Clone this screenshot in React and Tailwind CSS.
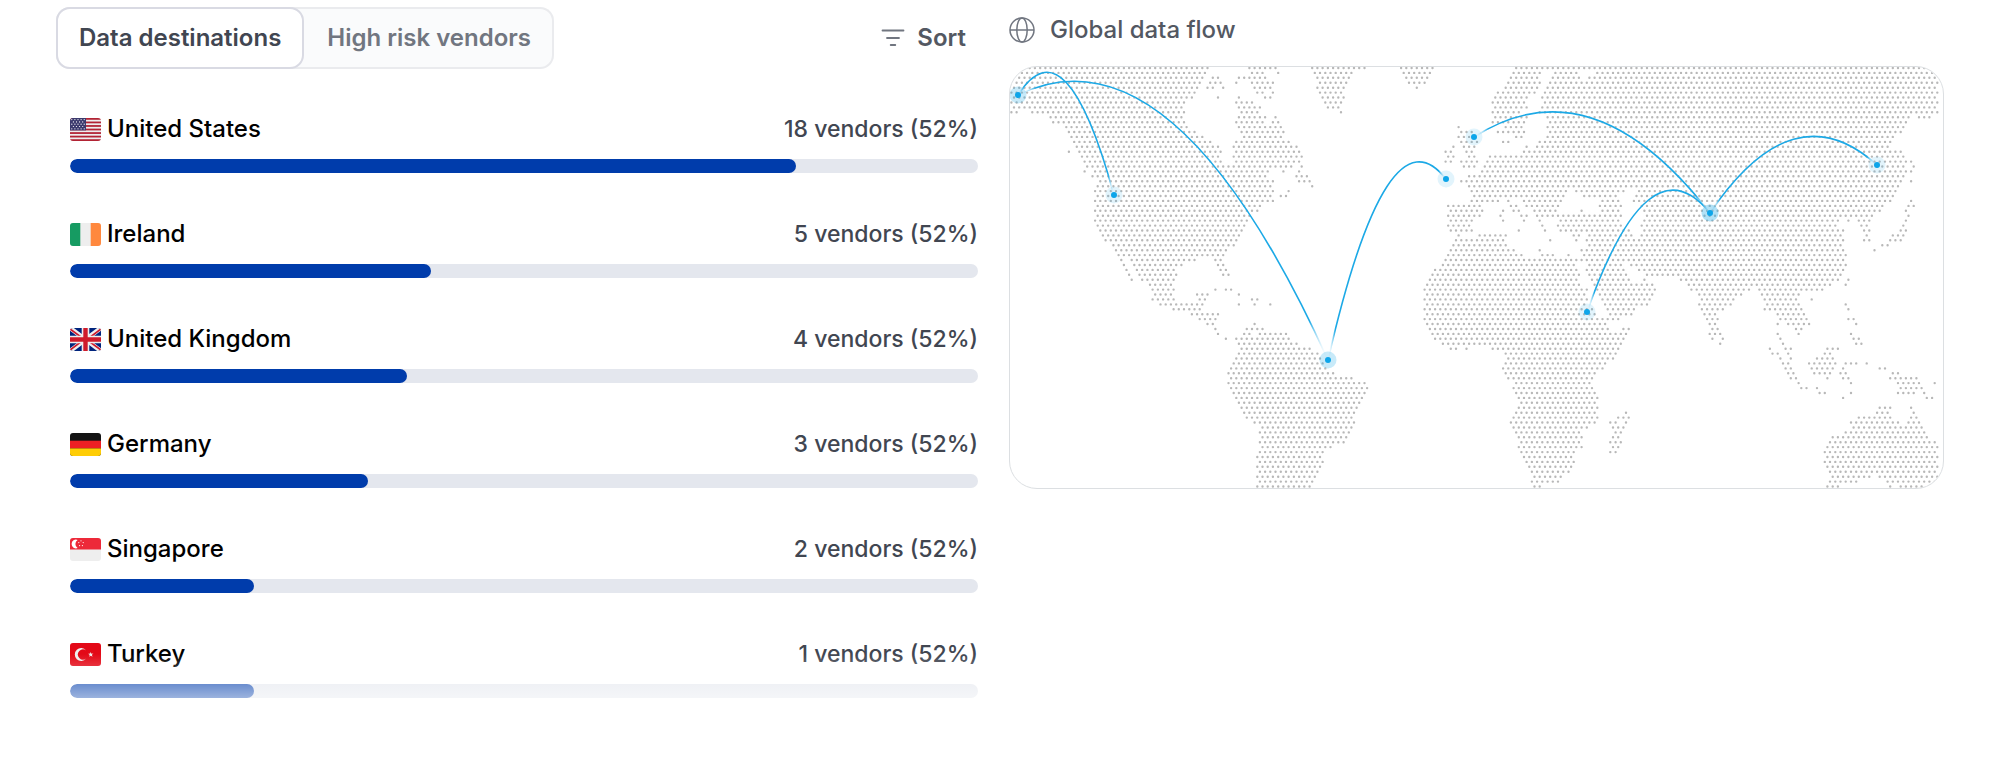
import React, { useState } from 'react';

const DESTINATIONS = [
  { code: 'us', country: 'United States', vendors: 18, share: 52, fill: 80 },
  { code: 'ie', country: 'Ireland', vendors: 5, share: 52, fill: 39.8 },
  { code: 'gb', country: 'United Kingdom', vendors: 4, share: 52, fill: 37.1 },
  { code: 'de', country: 'Germany', vendors: 3, share: 52, fill: 32.8 },
  { code: 'sg', country: 'Singapore', vendors: 2, share: 52, fill: 20.3 },
  { code: 'tr', country: 'Turkey', vendors: 1, share: 52, fill: 20.3 },
];

// Land spans for every dotted row of the map, north to south
const LAND_ROWS = [
  '15-199 238-265 302-355 392-422 505-917',
  '12-195 243-253 269-269 304-342 394-420 504-528 545-567 587-922',
  '10-192 203-208 229-255 307-340 397-418 502-530 543-567 579-579 585-925',
  '7-190 201-212 227-227 242-263 308-337 399-416 499-528 540-928',
  '5-187 198-203 214-214 245-261 308-334 407-407 497-525 538-925',
  '2-184 247-252 263-263 311-332 488-523 534-928',
  '2-180 208-208 229-229 256-261 310-334 485-515 534-925',
  '2-174 227-242 316-332 483-514 533-928',
  '4-172 229-250 318-328 485-517 534-925',
  '1-7 23-174 232-248 331-331 483-510 532-928',
  '40-172 229-253 266-266 485-515 535-898 910-920',
  '43-174 227-253 263-268 483-512 541-897',
  '55-177 229-271 448-448 498-513 538-894',
  '58-185 232-274 450-462 490-512 540-892',
  '62-193 234-271 447-460 493-493 507-512 537-883',
  '64-201 227-279 452-467 493-498 532-881',
  '67-208 224-287 443-443 453-467 517-517 528-878',
  '59-59 70-211 227-289 436-442 456-463 513-890',
  '73-208 224-292 438-443 460-466 480-894',
  '75-211 227-289 436-441 452-468 477-902',
  '78-282 292-292 454-464 475-894 904-904',
  '75-75 85-258 274-274 289-289 473-902',
  '82-257 287-297 458-894',
  '90-263 289-300 452-452 457-892 902-902',
  '87-261 303-303 459-889',
  '85-263 279-279 462-556 567-614 629-887',
  '87-259 271-276 464-555 572-608 627-884',
  '85-256 263-263 462-488 498-498 514-550 590-610 624-881 902-902',
  '87-248 438-470 501-506 517-550 590-612 629-873 898-904',
  '85-248 441-473 493-493 503-509 525-547 572-572 593-608 634-871 897-897',
  '87-240 438-468 491-491 512-517 527-612 637-862 899-899',
  '85-238 441-464 493-493 514-514 530-530 551-609 634-830 838-838 847-860 897-897',
  '87-233 438-460 533-533 548-613 632-823 852-857 894-894',
  '90-232 441-462 509-509 535-535 551-617 632-832 854-859 891-896',
  '92-230 449-449 470-496 564-569 579-620 630-830 857-857 883-893',
  '95-227 447-494 541-541 566-566 576-832 854-859 880-891',
  '103-224 444-496 579-833 873-878',
  '106-217 442-503 530-530 572-832 864-864',
  '109-213 439-512 530-543 559-559 573-836',
  '111-111 122-186 206-212 436-835',
  '114-114 124-172 208-214 433-566 577-613 621-836',
  '117-117 127-165 212-217 426-568 577-614 628-833',
  '119-119 130-164 213-219 423-567 580-617 635-831',
  '122-122 133-164 420-568 582-620 635-635 671-828 838-838',
  '138-161 417-570 584-643 678-821 836-836',
  '143-164 206-206 216-222 415-577 587-646 682-740 749-813',
  '146-161 187-198 229-229 417-574 589-643 689-731 752-789',
  '143-164 190-195 242-247 415-577 592-641 692-724 754-787 802-802',
  '151-193 229-229 245-245 261-261 417-574 594-638 689-721 757-789 836-836',
  '163-190 415-582 597-625 692-713 754-792 838-838',
  '182-208 417-585 600-622 694-706 768-794',
  '190-206 415-608 697-708 770-797 838-844',
  '198-203 245-245 417-597 700-706 768-768 778-799 846-846',
  '206-206 237-253 420-598 614-619 703-708 786-791',
  '208-208 234-240 250-277 423-617 700-711 768-768 789-789 841-841',
  '216-216 227-279 426-614 703-703 713-713 770-770 844-849',
  '229-287 433-612 711-711 773-773 846-851',
  '232-300 441-446 457-457 483-608 760-760 776-781 817-828',
  '229-308 496-606 762-768 778-778 815-820',
  '227-310 498-603 770-770 781-781 807-823',
  '224-313 496-595 773-778 799-825 836-847 857-857',
  '221-318 493-593 776-781 802-823 833-833 870-875',
  '219-323 496-585 778-783 804-820 830-836 883-888',
  '221-342 498-582 781-786 817-817 833-838 880-907',
  '219-356 506-580 789-789 841-841 888-909 925-925',
  '221-357 503-582 791-797 807-807 891-912',
  '224-355 506-585 810-815 841-841 888-904 914-914',
  '227-352 508-585 833-833 917-922',
  '229-350 511-585',
  '232-347 508-588 870-880 901-901',
  '234-344 506-585 616-616 867-878 904-904',
  '237-342 503-588 608-619 849-880 901-907',
  '245-344 501-585 600-606 616-616 841-888 899-909',
  '253-342 503-578 603-613 844-912',
  '250-339 506-570 606-611 836-914',
  '253-337 508-572 603-608 823-917',
  '250-334 511-570 600-611 820-925',
  '253-321 508-572 603-608 817-928',
  '250-313 511-565 600-606 815-925',
  '247-311 513-562 817-928',
  '250-313 516-564 815-925',
  '247-311 519-562 817-928',
  '250-308 522-559 820-927',
  '247-305 524-552 823-860 870-928',
  '250-302 522-549 820-847 878-925',
  '247-300 524-530 817-828 880-880 891-912',
];

const DOT_X = 5.231;
const DOT_Y = 4.924;

const landDots = LAND_ROWS.flatMap((row, r) => {
  const spans = row.split(' ').map((span) => span.split('-').map(Number));
  const start = r % 2 ? 1.4 : 4;
  const dots = [];
  for (let x = start; x < 932; x += DOT_X) {
    if (spans.some(([from, to]) => x >= from - 2.3 && x <= to + 2.3)) {
      dots.push([x, 1 + r * DOT_Y]);
    }
  }
  return dots;
});

// One path of zero-length round strokes keeps the DOM small
const LAND_PATH = landDots.map(([x, y]) => `M${x.toFixed(1)} ${y.toFixed(1)}h0`).join('');

const POINTS = {
  alaska: [8, 28],
  west: [104, 128],
  brazil: [318, 293],
  portugal: [436, 112],
  britain: [464, 70],
  asia: [700, 146],
  east: [867, 98],
  africa: [577, 245],
};

const ROUTES = [
  ['alaska', 'west'],
  ['alaska', 'brazil'],
  ['brazil', 'portugal'],
  ['britain', 'asia'],
  ['asia', 'east'],
  ['africa', 'asia'],
];

const routePath = (from, to) => {
  const [x1, y1] = POINTS[from];
  const [x2, y2] = POINTS[to];
  return `M${x1} ${y1}Q${(x1 + x2) / 2} ${Math.min(y1, y2) - 75.5} ${x2} ${y2}`;
};

const FLAGS = {
  us: (
    <>
      <rect width="31" height="23" fill="#eee" />
      {[0, 2, 4, 6, 8, 10, 12].map((i) => (
        <rect key={i} y={i * 1.77} width="31" height="1.77" fill="#b22334" />
      ))}
      <rect width="16" height="12.4" fill="#3c3b6e" />
      {[1.6, 3.9, 6.2, 8.5, 10.8].map((y, r) =>
        (r % 2 ? [3.4, 6.5, 9.6, 12.7] : [1.8, 4.9, 8, 11.1, 14.2]).map((x) => (
          <circle key={`${x}-${y}`} cx={x} cy={y} r="0.6" fill="#fff" />
        ))
      )}
    </>
  ),
  ie: (
    <>
      <rect width="31" height="23" fill="#eee" />
      <rect width="10.3" height="23" fill="#169b62" />
      <rect x="20.7" width="10.3" height="23" fill="#ff883e" />
    </>
  ),
  gb: (
    <>
      <rect width="31" height="23" fill="#00247d" />
      <path d="M0 0L31 23M31 0L0 23" stroke="#eee" strokeWidth="4.6" />
      <path d="M0 1L13 10.5M31 22L18 12.5M31 1L19 10M0 22L12 13" stroke="#cf1b2b" strokeWidth="1.6" />
      <path d="M15.5 0V23M0 11.5H31" stroke="#eee" strokeWidth="7.6" />
      <path d="M15.5 0V23M0 11.5H31" stroke="#cf1b2b" strokeWidth="4.4" />
    </>
  ),
  de: (
    <>
      <rect width="31" height="23" fill="#141414" />
      <rect y="7.7" width="31" height="7.7" fill="#ed1f24" />
      <rect y="15.4" width="31" height="7.6" fill="#ffcd05" />
    </>
  ),
  sg: (
    <>
      <rect width="31" height="23" fill="#eee" />
      <rect width="31" height="11.5" fill="#ed2939" />
      <path d="M7.6 1.9a4.4 4.4 0 1 0 0 8.2a4.9 4.9 0 0 1 0-8.2z" fill="#fff" />
      {[[11, 2.8], [8.8, 4.6], [13.2, 4.6], [9.6, 7.6], [12.4, 7.6]].map(([x, y]) => (
        <circle key={`${x}-${y}`} cx={x} cy={y} r="0.6" fill="#fff" />
      ))}
    </>
  ),
  tr: (
    <>
      <rect width="31" height="23" fill="#e30917" />
      <path d="M16.1 7.4a6.4 6.4 0 1 0 0 8.2a5.1 5.1 0 1 1 0-8.2z" fill="#eee" />
      <path d="M20.7 8.9l.7 1.8 2-.1-1.5 1.2.6 1.9-1.7-1-1.6 1.1.5-1.9-1.5-1.2 1.9-.1z" fill="#eee" />
    </>
  ),
};

function Flag({ code }) {
  return (
    <svg viewBox="0 0 31 23" className="h-[23px] w-[31px] shrink-0 rounded-[3px]" aria-hidden="true">
      {FLAGS[code]}
    </svg>
  );
}

function Tabs({ active, onChange }) {
  const base = 'h-[62px] rounded-[14px] border-2 px-[21px] text-2xl font-semibold cursor-pointer';
  const on = 'border-[#d9dae3] bg-white text-[#414651]';
  const off = 'border-transparent text-[#717680]';
  return (
    <div role="tablist" className="flex rounded-[14px] bg-[#fafbfc] shadow-[inset_0_0_0_2px_#eaebee]">
      <button
        type="button"
        role="tab"
        aria-selected={active === 'destinations'}
        onClick={() => onChange('destinations')}
        className={`${base} ${active === 'destinations' ? on : off}`}
      >
        Data destinations
      </button>
      <button
        type="button"
        role="tab"
        aria-selected={active === 'risk'}
        onClick={() => onChange('risk')}
        className={`${base} ${active === 'risk' ? on : off}`}
      >
        High risk vendors
      </button>
    </div>
  );
}

function DestinationRow({ code, country, vendors, share, fill }) {
  return (
    <li className="flex flex-col gap-3">
      <div className="flex items-center justify-between font-medium">
        <span className="flex items-center gap-1.5 text-[24px] leading-9 text-black">
          <Flag code={code} />
          {country}
        </span>
        <span className="text-[23px] leading-9 text-[#414651]">
          {vendors} vendors ({share}%)
        </span>
      </div>
      <div className="h-3.5 overflow-hidden rounded-full bg-[#e4e7ee]">
        <div className="h-full rounded-full bg-[#003cab]" style={{ width: `${fill}%` }} />
      </div>
    </li>
  );
}

function FlowMap() {
  return (
    <div className="overflow-hidden rounded-[28px] border border-[#dcdfe2]">
      <svg viewBox="0 0 933 421" className="block h-auto w-full" role="img" aria-label="Global data flow map">
        <defs>
          {ROUTES.map(([from, to]) => (
            <linearGradient key={from + to} id={`fade-${from}-${to}`}>
              <stop offset="0%" stopColor="#fff" stopOpacity="0" />
              <stop offset="6%" stopColor="#1ca9e6" />
              <stop offset="94%" stopColor="#1ca9e6" />
              <stop offset="100%" stopColor="#fff" stopOpacity="0" />
            </linearGradient>
          ))}
        </defs>
        <path d={LAND_PATH} stroke="#b8b8b8" strokeWidth="2.4" strokeLinecap="round" />
        {ROUTES.map(([from, to]) => (
          <path
            key={from + to}
            d={routePath(from, to)}
            fill="none"
            stroke={`url(#fade-${from}-${to})`}
            strokeWidth="1.6"
          />
        ))}
        {ROUTES.flat().map((name, i) => (
          <circle key={i} cx={POINTS[name][0]} cy={POINTS[name][1]} r="8.5" fill="#0ea5e9" opacity="0.12" />
        ))}
        {Object.entries(POINTS).map(([name, [x, y]]) => (
          <circle key={name} cx={x} cy={y} r="3" fill="#0ea5e9" />
        ))}
      </svg>
    </div>
  );
}

export default function App() {
  const [tab, setTab] = useState('destinations');

  return (
    <main className="grid grid-cols-[922fr_935fr] items-start gap-[31px] bg-white px-14 font-['Inter',sans-serif]">
      <section className="pt-[7px]">
        <div className="flex items-center justify-between">
          <Tabs active={tab} onChange={setTab} />
          <button
            type="button"
            className="flex items-center gap-3 pr-3 text-2xl font-semibold text-[#535862] cursor-pointer"
          >
            <svg viewBox="0 0 24 24" className="size-6" fill="none" stroke="#717680" strokeWidth="1.8" strokeLinecap="round">
              <path d="M1.5 4.5h21M6 12h12M9.7 19h4.6" />
            </svg>
            Sort
          </button>
        </div>

        <div className="relative mt-[42px] pb-7 pl-3.5">
          <ul className="flex flex-col gap-[43px]">
            {DESTINATIONS.map((d) => (
              <DestinationRow key={d.code} {...d} />
            ))}
          </ul>
          {/* Fades out the end of the list */}
          <div className="pointer-events-none absolute inset-x-0 bottom-0 h-18 bg-linear-to-b from-white/0 to-white" />
        </div>
      </section>

      <section className="pt-3">
        <h2 className="mb-[18px] flex h-9 items-center gap-[15px] text-2xl font-medium text-[#535862]">
          <svg viewBox="0 0 26 26" className="size-[26px]" fill="none" stroke="#717680" strokeWidth="1.5">
            <circle cx="13" cy="13" r="12" />
            <ellipse cx="13" cy="13" rx="5.2" ry="12" />
            <path d="M1 13h24" />
          </svg>
          Global data flow
        </h2>
        <FlowMap />
      </section>
    </main>
  );
}
